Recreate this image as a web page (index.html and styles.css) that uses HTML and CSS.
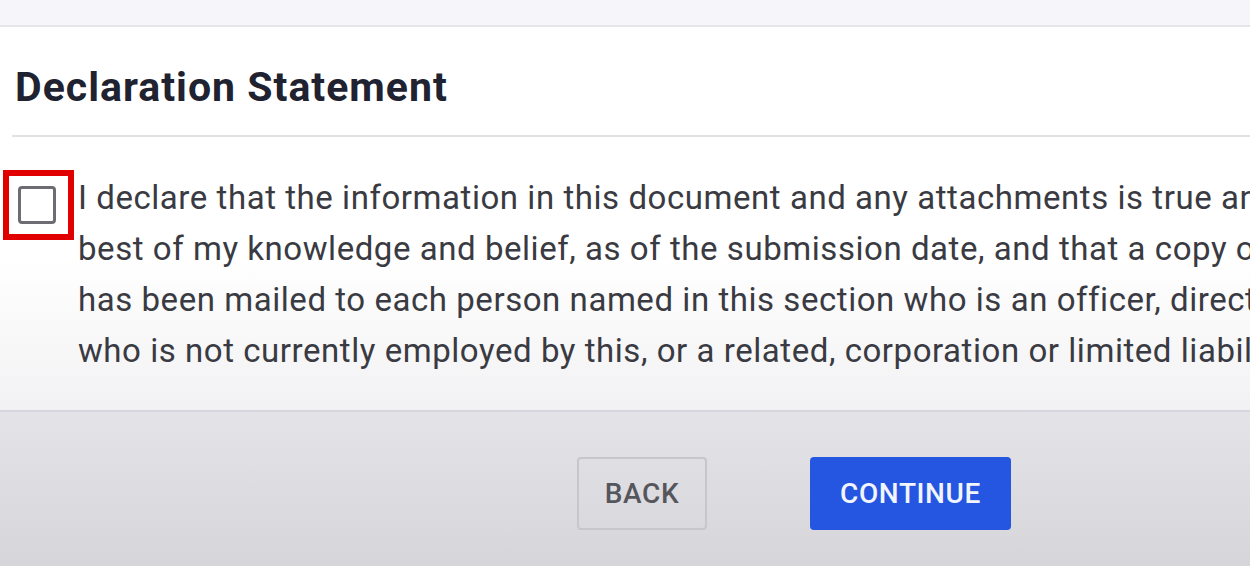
FILE: index.html
```html
<!DOCTYPE html>
<html>
<head>
<meta charset="utf-8">
<link rel="stylesheet" href="styles.css">
</head>
<body>
<div class="topband"></div>
<section class="card">
  <h1 class="title">Declaration Statement</h1>
  <div class="divider"></div>
  <div class="statement">
    <div class="check-highlight"><span class="checkbox"></span></div>
    <div class="text">
      <span class="line">I declare that the information in this document and any attachments is true and correct to the</span>
      <span class="line">best of my knowledge and belief, as of the submission date, and that a copy of this document</span>
      <span class="line">has been mailed to each person named in this section who is an officer, director or partner</span>
      <span class="line">who is not currently employed by this, or a related, corporation or limited liability partnership.</span>
    </div>
  </div>
</section>
<footer class="actions">
  <button class="btn btn-back">BACK</button>
  <button class="btn btn-continue">CONTINUE</button>
</footer>
</body>
</html>
```
FILE: styles.css
```css
html, body {
  margin: 0;
  padding: 0;
  width: 1250px;
  height: 566px;
  overflow: hidden;
  font-family: Roboto, "Liberation Sans", sans-serif;
}
body {
  background: #dcdbe0;
  display: flex;
  flex-direction: column;
}
.topband {
  height: 25px;
  background: #f6f5fa;
  border-bottom: 2px solid #e6e5ea;
  flex: none;
}
.card {
  background: linear-gradient(to bottom, #ffffff 0%, #ffffff 60%, #f2f2f4 100%);
  height: 383px;
  border-bottom: 2px solid #d7d6dc;
  flex: none;
  overflow: hidden;
}
.title {
  margin: 0;
  padding: 38px 0 0 15px;
  height: 70px;
  box-sizing: content-box;
  font-size: 41px;
  font-weight: 700;
  color: #1f2230;
  line-height: 44px;
  letter-spacing: 1px;
}
.divider {
  margin-left: 12px;
  height: 2px;
  background: #e2e2e6;
}
.statement {
  display: flex;
  padding-top: 33px;
}
.check-highlight {
  margin-left: 3px;
  width: 59px;
  height: 58px;
  border: 6px solid #e00000;
  display: flex;
  align-items: center;
  justify-content: center;
  flex: none;
}
.checkbox {
  width: 38px;
  height: 38px;
  border: 3px solid #6c6c72;
  border-radius: 4px;
  box-sizing: border-box;
  margin-right: 3px;
}
.text {
  margin-left: 4px;
  display: flex;
  flex-direction: column;
  font-size: 33px;
  letter-spacing: 0.55px;
  line-height: 51px;
  color: #3a3b42;
  margin-top: 2px;
}
.line {
  white-space: nowrap;
}
.actions {
  flex: 1;
  background: linear-gradient(to bottom, #e4e3e8, #d6d5da);
  display: flex;
  align-items: flex-start;
  padding: 45px 0 0 577px;
  gap: 103px;
}
.btn {
  font-family: Roboto, "Liberation Sans", sans-serif;
  font-size: 28px;
  font-weight: 500;
  letter-spacing: 0.6px;
  border-radius: 4px;
  height: 73px;
  cursor: pointer;
}
.btn-back {
  width: 130px;
  background: transparent;
  border: 2px solid #c6c6cb;
  color: #55565c;
}
.btn-continue {
  width: 201px;
  background: #2456e2;
  border: none;
  color: #f2f4ff;
}
```
